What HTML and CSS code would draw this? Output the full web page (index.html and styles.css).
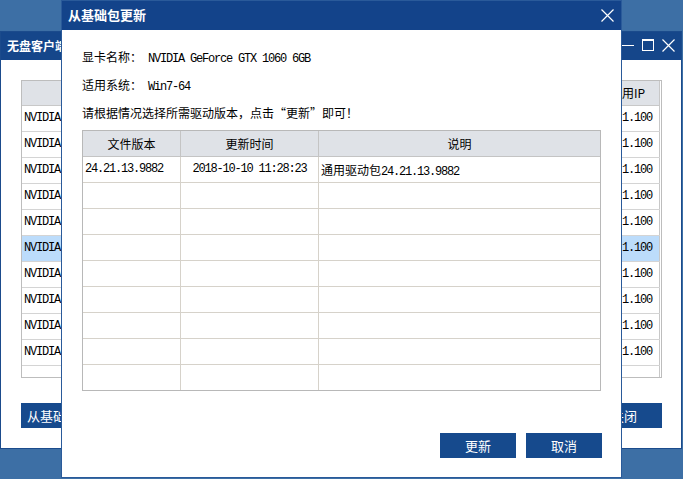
FILE: index.html
```html
<!DOCTYPE html>
<html lang="zh-CN">
<head>
<meta charset="utf-8">
<title>从基础包更新</title>
<link rel="stylesheet" href="styles.css">
</head>
<body>
<div class="win">
  <div class="win-title">
    <span class="win-title-text">无盘客户端驱动管理</span>
    <div class="win-ctrls">
      <svg class="ic-min" width="12" height="12" viewBox="0 0 12 12"><line x1="0" y1="6.5" x2="12" y2="6.5" stroke="#fff" stroke-width="1"/></svg>
      <svg class="ic-max" width="12" height="12" viewBox="0 0 12 12"><rect x="0.5" y="0.5" width="11" height="11" fill="none" stroke="#fff" stroke-width="1"/><line x1="0" y1="1.5" x2="12" y2="1.5" stroke="#fff" stroke-width="1"/></svg>
      <svg class="ic-close" width="13" height="13" viewBox="0 0 13 13"><path d="M0.5 0.5 L12.5 12.5 M12.5 0.5 L0.5 12.5" stroke="#fff" stroke-width="1.2" fill="none"/></svg>
    </div>
  </div>
  <div class="win-body">
    <div class="grid">
      <div class="grow ghead"><div class="gc c">显卡名称</div><div class="gc c">驱动版本</div><div class="gc c glast">客户机用IP</div></div>
      <div class="grow"><div class="gc m">NVIDIA GeForce GTX 1060 6GB</div><div class="gc"></div><div class="gc m glast">192.168.1.100</div></div>
      <div class="grow"><div class="gc m">NVIDIA GeForce GTX 1060 6GB</div><div class="gc"></div><div class="gc m glast">192.168.1.100</div></div>
      <div class="grow"><div class="gc m">NVIDIA GeForce GTX 1060 6GB</div><div class="gc"></div><div class="gc m glast">192.168.1.100</div></div>
      <div class="grow"><div class="gc m">NVIDIA GeForce GTX 1060 6GB</div><div class="gc"></div><div class="gc m glast">192.168.1.100</div></div>
      <div class="grow"><div class="gc m">NVIDIA GeForce GTX 1060 6GB</div><div class="gc"></div><div class="gc m glast">192.168.1.100</div></div>
      <div class="grow sel"><div class="gc m">NVIDIA GeForce GTX 1060 6GB</div><div class="gc"></div><div class="gc m glast">192.168.1.100</div></div>
      <div class="grow"><div class="gc m">NVIDIA GeForce GTX 1060 6GB</div><div class="gc"></div><div class="gc m glast">192.168.1.100</div></div>
      <div class="grow"><div class="gc m">NVIDIA GeForce GTX 1060 6GB</div><div class="gc"></div><div class="gc m glast">192.168.1.100</div></div>
      <div class="grow"><div class="gc m">NVIDIA GeForce GTX 1060 6GB</div><div class="gc"></div><div class="gc m glast">192.168.1.100</div></div>
      <div class="grow"><div class="gc m">NVIDIA GeForce GTX 1060 6GB</div><div class="gc"></div><div class="gc m glast">192.168.1.100</div></div>
      <div class="grow"><div class="gc"></div><div class="gc"></div><div class="gc glast"></div></div>
    </div>
    <div class="win-actions">
      <button class="btn btn-wide">从基础包更新</button>
      <button class="btn">关闭</button>
    </div>
  </div>
</div>

<div class="dlg">
  <div class="dlg-title">
    <span class="dlg-title-text">从基础包更新</span>
    <svg class="ic-close" width="13" height="13" viewBox="0 0 13 13"><path d="M0.5 0.5 L12.5 12.5 M12.5 0.5 L0.5 12.5" stroke="#fff" stroke-width="1.2" fill="none"/></svg>
  </div>
  <div class="dlg-body">
    <div class="info">显卡名称：<span class="m"> NVIDIA GeForce GTX 1060 6GB</span></div>
    <div class="info">适用系统：<span class="m"> Win7-64</span></div>
    <div class="info">请根据情况选择所需驱动版本，点击“更新”即可！</div>
    <div class="tbl">
      <div class="trow thead"><div class="tc c">文件版本</div><div class="tc c">更新时间</div><div class="tc c">说明</div></div>
      <div class="trow"><div class="tc m">24.21.13.9882</div><div class="tc c m">2018-10-10 11:28:23</div><div class="tc">通用驱动包<span class="m">24.21.13.9882</span></div></div>
      <div class="trow"><div class="tc"></div><div class="tc"></div><div class="tc"></div></div>
      <div class="trow"><div class="tc"></div><div class="tc"></div><div class="tc"></div></div>
      <div class="trow"><div class="tc"></div><div class="tc"></div><div class="tc"></div></div>
      <div class="trow"><div class="tc"></div><div class="tc"></div><div class="tc"></div></div>
      <div class="trow"><div class="tc"></div><div class="tc"></div><div class="tc"></div></div>
      <div class="trow"><div class="tc"></div><div class="tc"></div><div class="tc"></div></div>
      <div class="trow"><div class="tc"></div><div class="tc"></div><div class="tc"></div></div>
      <div class="trow"><div class="tc"></div><div class="tc"></div><div class="tc"></div></div>
    </div>
    <div class="dlg-actions">
      <button class="btn dbtn">更新</button>
      <button class="btn dbtn">取消</button>
    </div>
  </div>
</div>
</body>
</html>
```

FILE: styles.css
```css
* { box-sizing: border-box; }
html, body { margin: 0; padding: 0; }
body {
  width: 683px;
  height: 479px;
  overflow: hidden;
  position: relative;
  background: #3d6fa5;
  font-family: "Noto Sans CJK SC", "Liberation Sans", sans-serif;
  font-size: 12px;
  color: #000;
}
.m {
  font-family: "Liberation Mono", "Noto Sans CJK SC", monospace;
  font-size: 12px;
  letter-spacing: -1.2px;
}
.c { text-align: center; }

/* background window */
.win {
  margin-top: 31px;
  width: 682px;
  height: 418px;
  border: 1px solid #1b4b8c;
  background: #fff;
  display: flex;
  flex-direction: column;
}
.win-title {
  height: 28px;
  background: #15468a;
  display: flex;
  align-items: center;
  justify-content: space-between;
  padding: 0 6px 0 6px;
  flex: none;
}
.win-title-text {
  color: #fff;
  font-weight: bold;
  font-size: 12px;
  line-height: 28px;
  white-space: nowrap;
}
.win-ctrls {
  display: flex;
  align-items: center;
  gap: 8px;
  margin-top: -2px;
}
.win-ctrls svg { display: block; }
.win-body {
  padding: 20px 19px 0 20px;
  display: flex;
  flex-direction: column;
}
.grid {
  height: 298px;
  overflow: hidden;
  border: 1px solid #bdbdbd;
  padding-right: 1px;
}
.grow {
  display: grid;
  grid-template-columns: 200px 1fr 88px;
  height: 26px;
  border-bottom: 1px solid #d4d4d4;
}
.grow.ghead {
  height: 25px;
  background: #dfe2e7;
  border-bottom: 1px solid #c8c8c8;
}
.grow.sel { background: #bcdcfb; }
.gc {
  line-height: 25px;
  padding-left: 2px;
  white-space: nowrap;
  overflow: hidden;
}
.ghead .gc { line-height: 24px; padding-left: 0; }
.gc.glast { border-right: 1px solid #c8c8c8; }
.win-actions {
  margin-top: 25px;
  display: flex;
  justify-content: space-between;
}
.btn {
  height: 25px;
  width: 76px;
  border: none;
  padding: 0;
  margin: 0;
  background: #164a8d;
  color: #fff;
  font-family: "Noto Sans CJK SC", "Liberation Sans", sans-serif;
  font-size: 13px;
  line-height: 25px;
}
.btn-wide { width: 110px; text-align: left; padding-left: 6px; }

/* dialog */
.dlg {
  position: absolute;
  left: 61px;
  top: 0;
  width: 561px;
  height: 478px;
  border: 1px solid #2a5a9a;
  background: #fff;
  display: flex;
  flex-direction: column;
}
.dlg-title {
  height: 29px;
  background: #13438a;
  display: flex;
  align-items: center;
  justify-content: space-between;
  padding: 0 7px 0 6px;
  flex: none;
}
.dlg-title-text {
  color: #fff;
  font-weight: bold;
  font-size: 13px;
  line-height: 29px;
  margin-top: -2px;
}
.dlg-title svg { display: block; margin-top: -1px; }
.dlg-body {
  padding: 13px 19px 0 20px;
  display: flex;
  flex-direction: column;
}
.info {
  line-height: 28px;
  height: 28px;
  white-space: nowrap;
}
.tbl {
  margin-top: 3px;
  width: 519px;
  border: 1px solid #b8b8b8;
}
.trow {
  display: grid;
  grid-template-columns: 98px 138px 1fr;
  height: 26px;
  border-bottom: 1px solid #d6d2ca;
}
.trow:last-child { border-bottom: none; height: 25px; }
.trow.thead {
  background: #dfe2e7;
  border-bottom: 1px solid #c4c4c4;
}
.tc {
  line-height: 25px;
  padding-left: 2px;
  white-space: nowrap;
  overflow: hidden;
  border-right: 1px solid #d6d2ca;
}
.tc.c { padding-left: 0; }
.thead .tc { border-right-color: #c4c4c4; }
.tc:last-child { border-right: none; }
.dlg-actions {
  margin-top: 42px;
  display: flex;
  justify-content: flex-end;
  gap: 10px;
}
.dbtn { width: 76px; }
```
